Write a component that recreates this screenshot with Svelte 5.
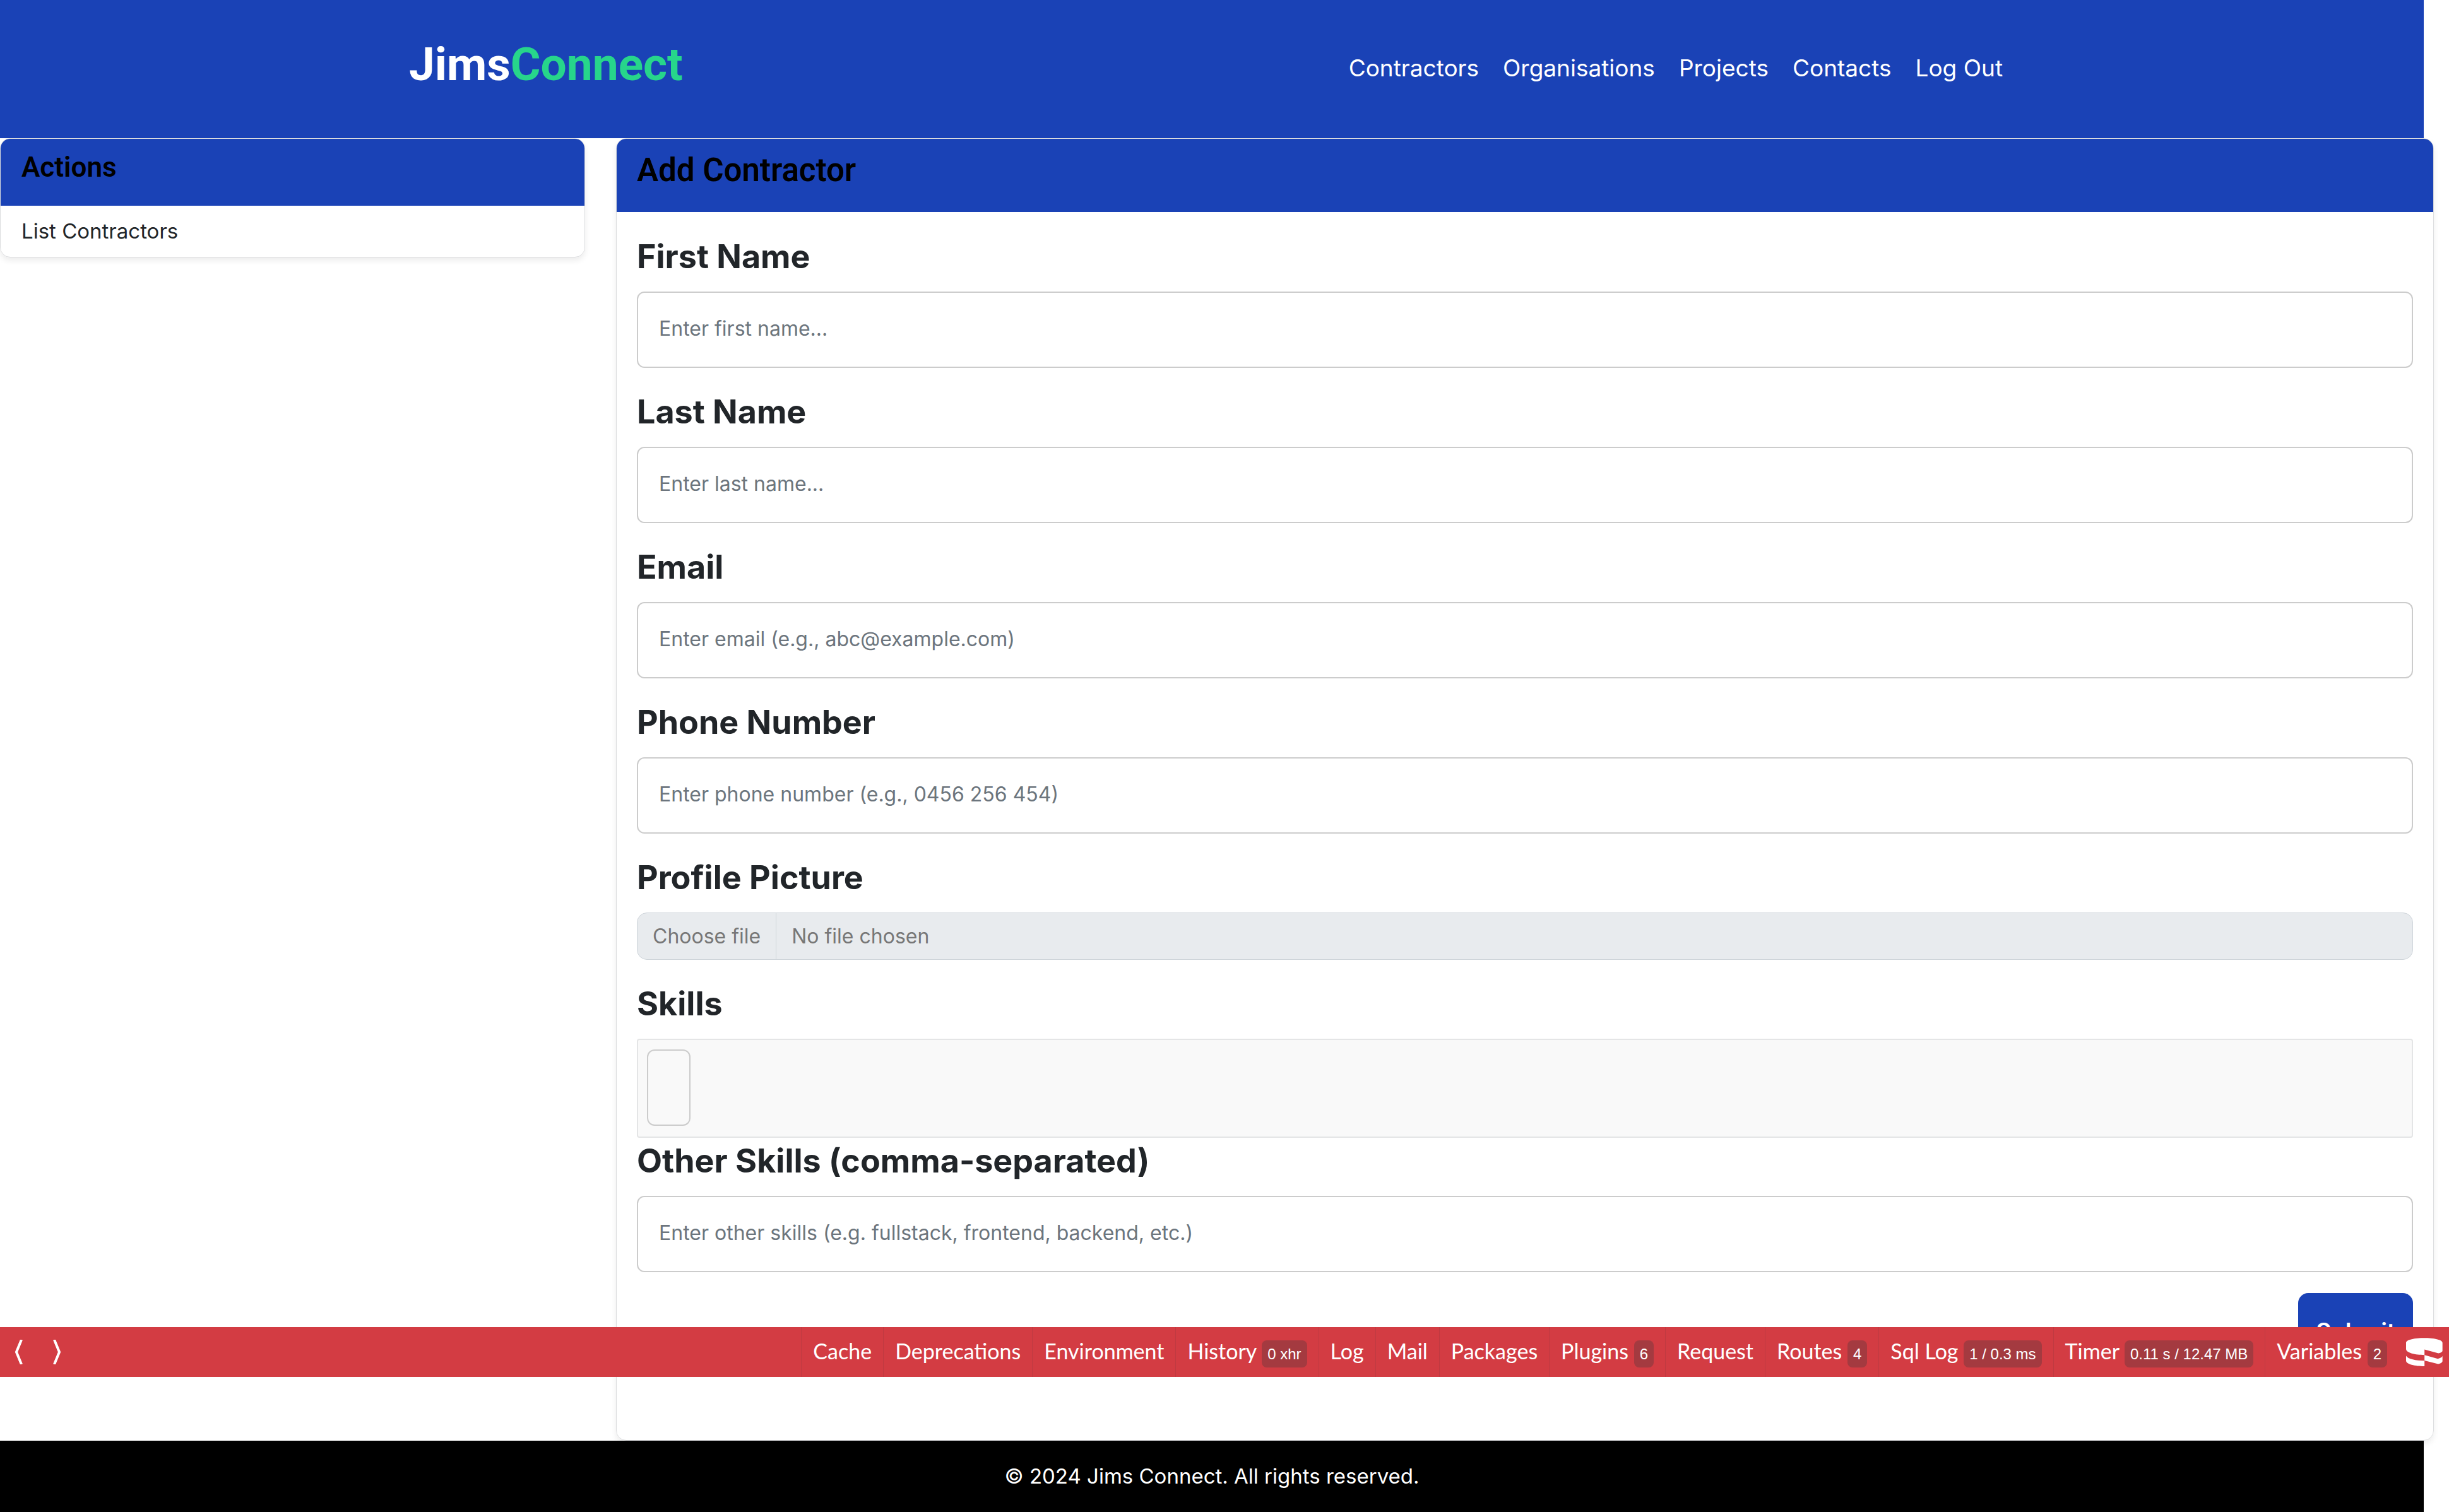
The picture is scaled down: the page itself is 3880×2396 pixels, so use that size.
<script>
  const nav = ['Contractors', 'Organisations', 'Projects', 'Contacts', 'Log Out'];

  const fields = [
    { id: 'first-name', type: 'text', label: 'First Name', hint: 'Enter first name...' },
    { id: 'last-name', type: 'text', label: 'Last Name', hint: 'Enter last name...' },
    { id: 'email', type: 'email', label: 'Email', hint: 'Enter email (e.g., abc@example.com)' },
    { id: 'phone', type: 'tel', label: 'Phone Number', hint: 'Enter phone number (e.g., 0456 256 454)' }
  ];

  const panels = [
    { name: 'Cache' },
    { name: 'Deprecations' },
    { name: 'Environment' },
    { name: 'History', badge: '0 xhr' },
    { name: 'Log' },
    { name: 'Mail' },
    { name: 'Packages' },
    { name: 'Plugins', badge: '6' },
    { name: 'Request' },
    { name: 'Routes', badge: '4' },
    { name: 'Sql Log', badge: '1 / 0.3 ms' },
    { name: 'Timer', badge: '0.11 s / 12.47 MB' },
    { name: 'Variables', badge: '2' }
  ];
</script>

<header class="site-header">
  <div class="header-inner">
    <a class="brand" href="/">Jims<span>Connect</span></a>
    <nav>
      {#each nav as item}
        <a href="/">{item}</a>
      {/each}
    </nav>
  </div>
</header>

<main>
  <aside class="card">
    <h4>Actions</h4>
    <a class="action" href="/">List Contractors</a>
  </aside>

  <section class="card">
    <h3>Add Contractor</h3>
    <form>
      {#each fields as field}
        <div class="field">
          <label class="title" for={field.id}>{field.label}</label>
          <input class="text" id={field.id} type={field.type} placeholder={field.hint} />
        </div>
      {/each}

      <div class="field">
        <label class="title" for="picture">Profile Picture</label>
        <label class="file">
          <input id="picture" type="file" disabled />
          <span class="choose">Choose file</span>
          <span class="chosen">No file chosen</span>
        </label>
      </div>

      <div class="field skills-field">
        <label class="title" for="skills">Skills</label>
        <div class="skills">
          <input id="skills" type="checkbox" />
        </div>
      </div>

      <div class="field last">
        <label class="title" for="other">Other Skills (comma-separated)</label>
        <input class="text" id="other" type="text" placeholder="Enter other skills (e.g. fullstack, frontend, backend, etc.)" />
      </div>

      <button class="submit" type="submit">Submit</button>
    </form>
  </section>
</main>

<footer>© 2024 Jims Connect. All rights reserved.</footer>

<div class="toolbar">
  <div class="arrows">
    <button type="button" aria-label="Scroll left">
      <svg viewBox="0 0 12 39"><path d="M10 0 2 19.500 10 39" /></svg>
    </button>
    <button type="button" aria-label="Scroll right">
      <svg viewBox="0 0 12 39"><path d="M2 0 10 19.500 2 39" /></svg>
    </button>
  </div>
  <ul>
    {#each panels as panel}
      <li>
        <button type="button">
          {panel.name}
          {#if panel.badge}<span class="badge">{panel.badge}</span>{/if}
        </button>
      </li>
    {/each}
  </ul>
  <button class="cake" type="button" aria-label="Toggle debug toolbar">
    <svg viewBox="997 419 173 134">
      <path d="M997 442C997 412 1169 412 1169 442V480Q1169 488 1150 492L1084 474V500C1040 500 997 490 997 472Z" />
      <path d="M997 504C1005 520 1045 527 1084 527V553C1040 553 997 544 997 527Z" />
      <path d="M1084 500 1147 518Q1166 514 1169 505V530Q1167 538 1149 543L1084 526Z" />
    </svg>
  </button>
</div>

<style>
  :global(body) {
    margin: 0;
    background: #fff;
    color: #212529;
    font-family: Inter, 'Liberation Sans', sans-serif;
    font-size: 32px;
  }

  a {
    color: inherit;
    text-decoration: none;
  }

  button {
    border: 0;
    background: none;
    color: #fff;
    font: inherit;
  }

  input {
    box-sizing: border-box;
    margin: 0;
  }

  .site-header {
    margin-right: 40px;
    background: #1a42b6;
    color: #fff;
  }

  .header-inner {
    display: flex;
    align-items: center;
    justify-content: space-between;
    max-width: 2544px;
    min-height: 219px;
    margin: 0 auto;
  }

  .brand {
    padding-bottom: 16px;
    font: 700 73px/100px Roboto, sans-serif;
  }

  .brand span {
    color: #27d58b;
  }

  nav {
    display: flex;
    font-size: 37px;
    line-height: 54px;
  }

  nav a {
    padding: 0 19px 3px;
  }

  main {
    display: grid;
    grid-template-columns: minmax(0, 927fr) minmax(0, 2880fr);
    align-items: start;
    gap: 49px;
    padding-right: 24px;
  }

  .card {
    overflow: hidden;
    border: 1px solid #dcdddf;
    border-radius: 16px;
    box-shadow: 0 5px 10px rgba(0, 0, 0, 0.075);
  }

  h3,
  h4 {
    margin: 0;
    background: #1a42b6;
    color: #000;
    font-family: Roboto, sans-serif;
    font-weight: 600;
  }

  h4 {
    padding: 18px 33px 34px;
    font-size: 44px;
    line-height: 54px;
  }

  h3 {
    padding: 20px 32px 36px;
    font-size: 51px;
    line-height: 60px;
  }

  .action {
    display: block;
    padding: 16px 33px 17px;
    font-size: 33px;
    line-height: 48px;
  }

  form {
    display: flex;
    flex-direction: column;
    padding: 39px 32px 112px;
  }

  .field {
    display: flex;
    flex-direction: column;
    gap: 23px;
    margin-bottom: 38px;
  }

  .skills-field {
    margin-bottom: 5px;
  }

  .last {
    margin-bottom: 33px;
  }

  .title {
    align-self: start;
    font-size: 52px;
    font-weight: 700;
    line-height: 64px;
  }

  .text {
    width: 100%;
    height: 121px;
    padding: 0 33px 4px;
    border: 2px solid #ccc;
    border-radius: 12px;
    background: #fff;
    font: inherit;
  }

  .text::placeholder {
    color: #6c757d;
    opacity: 1;
  }

  .file {
    display: flex;
    overflow: hidden;
    border: 1px solid #ced4da;
    border-radius: 16px;
    background: #e8ebee;
    color: #777;
    line-height: 73px;
  }

  .file input {
    width: 0;
    opacity: 0;
  }

  .choose {
    padding: 0 24px;
    border-right: 1px solid #ced4da;
  }

  .chosen {
    padding: 0 24px;
  }

  .skills {
    display: flex;
    padding: 15px 14px 17px;
    border: 2px solid #e4e5e6;
    border-radius: 4px;
    background: #f9f9f9;
  }

  .skills input {
    width: 69px;
    height: 121px;
    appearance: none;
    border: 2px solid #ccc;
    border-radius: 12px;
  }

  .submit {
    align-self: end;
    height: 121px;
    padding: 0 28px;
    border-radius: 16px;
    background: #1a42b6;
    font-size: 37px;
    font-weight: 600;
  }

  footer {
    margin-right: 40px;
    padding: 32px 0 33px;
    background: #000;
    color: #fff;
    font-size: 33px;
    line-height: 48px;
    text-align: center;
  }

  /* Debug bar floating above the page */
  .toolbar {
    position: fixed;
    right: 0;
    bottom: 214px;
    left: 0;
    display: flex;
    align-items: stretch;
    height: 79px;
    background: #d33c43;
    color: #fff;
    font-family: Lato, sans-serif;
    font-size: 34px;
  }

  .arrows {
    display: flex;
    gap: 24px;
    padding-left: 12px;
  }

  .arrows button {
    display: flex;
    align-items: center;
    padding: 0 12px;
  }

  .arrows svg {
    width: 12px;
    height: 39px;
    fill: none;
    stroke: #fff;
    stroke-width: 4;
  }

  ul {
    display: flex;
    margin: 0 0 0 auto;
    padding: 0;
    list-style: none;
  }

  li {
    display: flex;
    border-left: 1px solid #bf3a41;
  }

  li button {
    padding: 0 18px 3px;
    line-height: 48px;
    white-space: nowrap;
  }

  .badge {
    display: inline-block;
    margin: -10px 0;
    padding: 0 9px;
    border-radius: 8px;
    background: #a43a40;
    font: 24px/43px 'Liberation Sans', sans-serif;
  }

  .cake {
    display: flex;
    align-items: center;
    padding: 0 10px 0 12px;
  }

  .cake svg {
    width: 58px;
    height: 45px;
    fill: #fff;
  }
</style>
